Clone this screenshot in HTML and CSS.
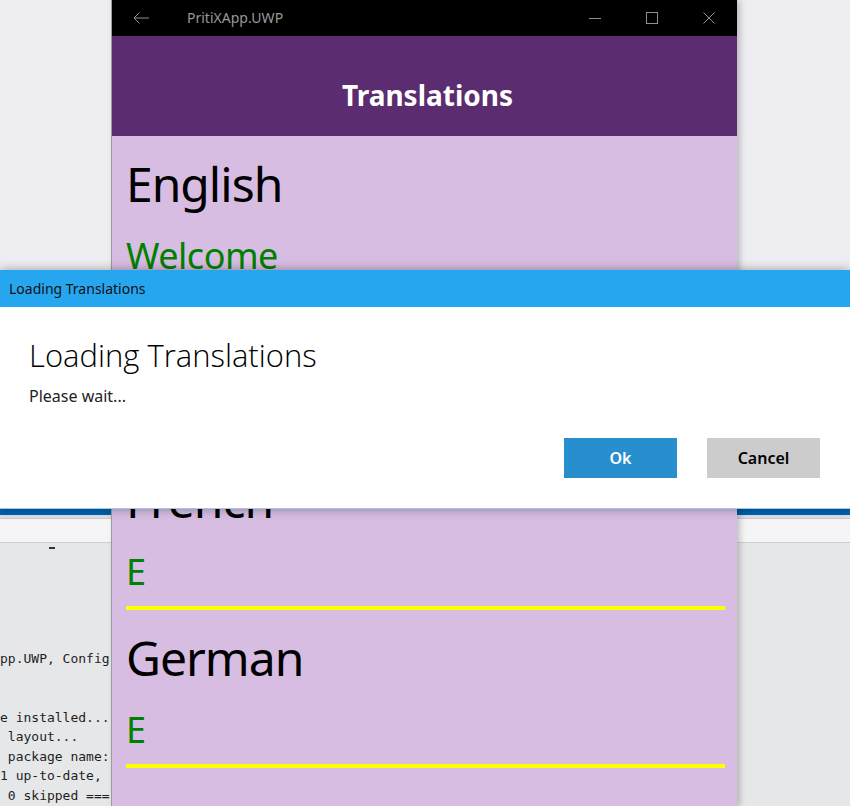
FILE: index.html
```html
<!DOCTYPE html>
<html lang="en">
<head>
<meta charset="utf-8">
<title>PritiXApp.UWP</title>
<link rel="stylesheet" href="styles.css">
</head>
<body>
<div class="desk">
  <div class="desk-top"></div>
  <div class="vs-bar"></div>
  <div class="vs-strip"></div>
  <div class="vs-toolbar"></div>
  <div class="output">
    <div class="caret"></div>
<pre class="log">pp.UWP, Config


e installed...
 layout...
 package name:
1 up-to-date,
 0 skipped ===</pre>
  </div>
</div>

<div class="app">
  <div class="titlebar">
    <div class="back">
      <svg width="16" height="12" viewBox="0 0 16 12"><path d="M16 6H1M6.5 0.5L1 6l5.5 5.5" fill="none" stroke="#8f8f8f" stroke-width="1"/></svg>
    </div>
    <div class="app-title">PritiXApp.UWP</div>
    <div class="caption-btn">
      <svg width="12" height="12" viewBox="0 0 12 12"><path d="M0 6.5h12" stroke="#8f8f8f" stroke-width="1"/></svg>
    </div>
    <div class="caption-btn">
      <svg width="12" height="12" viewBox="0 0 12 12"><rect x="0.5" y="0.5" width="11" height="11" fill="none" stroke="#8f8f8f" stroke-width="1"/></svg>
    </div>
    <div class="caption-btn">
      <svg width="12" height="12" viewBox="0 0 12 12"><path d="M0.5 0.5l11 11M11.5 0.5l-11 11" stroke="#8f8f8f" stroke-width="1"/></svg>
    </div>
  </div>
  <div class="navbar"><h1>Translations</h1></div>
  <div class="content">
    <section class="lang">
      <div class="lang-name">English</div>
      <div class="lang-text">Welcome</div>
      <div class="rule"></div>
    </section>
    <section class="lang">
      <div class="lang-name">&nbsp;</div>
      <div class="lang-text">&nbsp;</div>
      <div class="rule"></div>
    </section>
    <section class="lang">
      <div class="lang-name">French</div>
      <div class="lang-text">E</div>
      <div class="rule"></div>
    </section>
    <section class="lang">
      <div class="lang-name">German</div>
      <div class="lang-text">E</div>
      <div class="rule"></div>
    </section>
  </div>
</div>

<div class="dialog">
  <div class="dialog-bar">Loading Translations</div>
  <div class="dialog-body">
    <h2>Loading Translations</h2>
    <p>Please wait...</p>
    <div class="actions">
      <button class="btn btn-ok">Ok</button>
      <button class="btn btn-cancel">Cancel</button>
    </div>
  </div>
</div>
</body>
</html>
```

FILE: styles.css
```css
html, body {
  margin: 0;
  padding: 0;
}
body {
  width: 850px;
  height: 806px;
  overflow: hidden;
  position: relative;
  background: #eeedf2;
  font-family: "Noto Sans", "Open Sans", sans-serif;
}

/* desktop / IDE behind the app */
.desk {
  display: flex;
  flex-direction: column;
  height: 806px;
}
.desk-top {
  height: 509px;
  flex: none;
  background: #eeedf2;
}
.vs-bar {
  height: 6px;
  flex: none;
  background: #0063b1;
}
.vs-strip {
  height: 3px;
  flex: none;
  background: #dfdfe3;
}
.vs-toolbar {
  height: 23px;
  flex: none;
  background: #f5f5f7;
  border-top: 1px solid #cdcdd5;
  border-bottom: 1px solid #cdcdd5;
}
.output {
  flex: 1;
  background: #e6e7e9;
  display: flex;
  flex-direction: column;
}
.caret {
  width: 6px;
  height: 2px;
  margin: 4px 0 0 49px;
  background: #333;
}
.log {
  width: 111px;
  margin: 100px 0 0 0;
  font-family: "DejaVu Sans Mono", "Liberation Mono", monospace;
  font-size: 13px;
  line-height: 19.5px;
  color: #1e1e1e;
  white-space: pre;
}

/* app window */
.app {
  position: absolute;
  left: 111px;
  top: 0;
  width: 625px;
  height: 806px;
  border-left: 1px solid #9c9c9c;
  box-shadow: 3px 0 6px rgba(0, 0, 0, 0.22);
  background: #d7bde2;
  display: flex;
  flex-direction: column;
}
.titlebar {
  height: 36px;
  flex: none;
  background: #000;
  display: flex;
  align-items: center;
  color: #999;
  font-size: 14px;
}
.back {
  width: 54px;
  padding-left: 21px;
  display: flex;
  align-items: center;
}
.app-title {
  flex: 1;
  line-height: 20px;
}
.caption-btn {
  width: 57px;
  height: 36px;
  display: flex;
  align-items: center;
  justify-content: center;
}
.navbar {
  height: 100px;
  flex: none;
  background: #5b2c6f;
  display: flex;
  justify-content: center;
  align-items: flex-start;
  box-sizing: border-box;
  padding-top: 40px;
  padding-left: 6px;
}
.navbar h1 {
  margin: 0;
  color: #fff;
  font-size: 28px;
  font-weight: 700;
  line-height: 38px;
}
.content {
  flex: 1;
  padding: 16px 12px 0 14px;
  display: flex;
  flex-direction: column;
  gap: 16px;
}
.lang {
  display: flex;
  flex-direction: column;
}
.lang-name {
  font-size: 48px;
  line-height: 64px;
  letter-spacing: -1px;
  color: #000;
}
.lang-text {
  margin-top: 16px;
  font-size: 36px;
  line-height: 48px;
  letter-spacing: -0.5px;
  color: #008000;
}
.rule {
  margin-top: 10px;
  height: 4px;
  background: #ffff00;
}

/* dialog */
.dialog {
  position: absolute;
  left: 0;
  top: 270px;
  width: 850px;
  background: #fff;
  border-bottom: 1px solid #9ccbe6;
  box-shadow: 0 0 10px rgba(0, 0, 0, 0.35);
}
.dialog-bar {
  height: 37px;
  background: #27a6f0;
  display: flex;
  align-items: center;
  padding-left: 9px;
  font-size: 14px;
  color: #111;
}
.dialog-body {
  padding: 28px 30px 30px 29px;
}
.dialog-body h2 {
  margin: 0;
  font-family: "Open Sans", "Noto Sans", sans-serif;
  font-size: 31px;
  font-weight: 300;
  line-height: 40px;
  color: #000;
}
.dialog-body p {
  margin: 10px 0 0;
  font-size: 16px;
  line-height: 22px;
  color: #222;
}
.actions {
  display: flex;
  justify-content: flex-end;
  gap: 30px;
  margin-top: 31px;
}
.btn {
  width: 113px;
  height: 40px;
  border: 0;
  padding: 0;
  font-family: "Noto Sans", "Open Sans", sans-serif;
  font-size: 16px;
  font-weight: 600;
}
.btn-ok {
  background: #288fce;
  color: #fff;
}
.btn-cancel {
  background: #cccccc;
  color: #000;
}
```
